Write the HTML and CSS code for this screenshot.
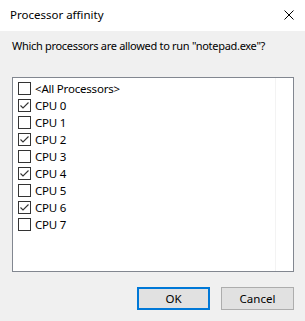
FILE: index.html
```html
<!DOCTYPE html>
<html lang="en">
<head>
    <meta charset="UTF-8">
    <meta name="viewport" content="width=device-width, initial-scale=1.0">
    <title>Processor affinity</title>
    <link rel="stylesheet" href="styles.css">
</head>
<body>
    <div class="dialog">
        <div class="titlebar">
            <span class="title">Processor affinity</span>
            <span class="close">
                <svg width="10" height="10" viewBox="0 0 10 10">
                    <path d="M0.5 0.5 L9.5 9.5 M9.5 0.5 L0.5 9.5" stroke="#000" stroke-width="1" fill="none"/>
                </svg>
            </span>
        </div>
        <div class="dialog-body">
            <p class="prompt">Which processors are allowed to run "notepad.exe"?</p>
            <div class="list">
                <ul class="cpu-list">
                    <li><span class="check"></span>&lt;All Processors&gt;</li>
                    <li><span class="check checked"><svg width="13" height="13" viewBox="0 0 13 13"><path d="M2.5 6.5 L5 9 L10.5 3.5" stroke="#333" stroke-width="1.1" fill="none"/></svg></span>CPU 0</li>
                    <li><span class="check"></span>CPU 1</li>
                    <li><span class="check checked"><svg width="13" height="13" viewBox="0 0 13 13"><path d="M2.5 6.5 L5 9 L10.5 3.5" stroke="#333" stroke-width="1.1" fill="none"/></svg></span>CPU 2</li>
                    <li><span class="check"></span>CPU 3</li>
                    <li><span class="check checked"><svg width="13" height="13" viewBox="0 0 13 13"><path d="M2.5 6.5 L5 9 L10.5 3.5" stroke="#333" stroke-width="1.1" fill="none"/></svg></span>CPU 4</li>
                    <li><span class="check"></span>CPU 5</li>
                    <li><span class="check checked"><svg width="13" height="13" viewBox="0 0 13 13"><path d="M2.5 6.5 L5 9 L10.5 3.5" stroke="#333" stroke-width="1.1" fill="none"/></svg></span>CPU 6</li>
                    <li><span class="check"></span>CPU 7</li>
                </ul>
            </div>
            <div class="button-row">
                <button class="button default">OK</button>
                <button class="button">Cancel</button>
            </div>
        </div>
    </div>
</body>
</html>
```
FILE: styles.css
```css
body, html {
    margin: 0;
    height: 100%;
    font-family: "Noto Sans", "Open Sans", sans-serif;
    font-size: 11px;
    color: #000;
    overflow: hidden;
}
.dialog {
    width: 305px;
    height: 321px;
    display: flex;
    flex-direction: column;
    background-color: #f0f0f0;
}
.titlebar {
    height: 31px;
    background-color: #fff;
    display: flex;
    align-items: center;
    justify-content: space-between;
    padding: 0 11px 0 10px;
    flex-shrink: 0;
}
.title {
    line-height: 16px;
    font-size: 11.5px;
    margin-top: -1px;
}
.close {
    display: flex;
    margin-top: -1px;
}
.dialog-body {
    flex: 1;
    padding: 7px 11px 0 12px;
    display: flex;
    flex-direction: column;
}
.prompt {
    margin: 0;
    line-height: 16px;
    white-space: nowrap;
    letter-spacing: -0.3px;
}
.list {
    margin-top: 23px;
    height: 193px;
    flex-shrink: 0;
    background-color: #fff;
    border: 1px solid #828790;
    display: flex;
}
.cpu-list {
    list-style-type: none;
    margin: 0;
    padding: 2px 0 0 0;
    width: 262px;
    border-right: 1px solid #f3f3f3;
}
.cpu-list li {
    height: 17px;
    display: flex;
    align-items: center;
    padding-left: 5px;
    line-height: 17px;
    font-size: 11.5px;
    letter-spacing: -0.2px;
}
.check {
    width: 11px;
    height: 11px;
    border: 1px solid #333;
    background-color: #fff;
    margin-right: 4px;
    display: flex;
    position: relative;
}
.check svg {
    position: absolute;
    left: -1px;
    top: -1px;
}
.button-row {
    display: flex;
    justify-content: flex-end;
    gap: 11px;
    margin-top: 15px;
}
.button {
    width: 73px;
    height: 23px;
    padding: 0;
    font-family: inherit;
    font-size: 11.5px;
    color: #000;
    background-color: #e1e1e1;
    border: 1px solid #adadad;
    border-radius: 0;
}
.button.default {
    border: 2px solid #0078d7;
}
```
